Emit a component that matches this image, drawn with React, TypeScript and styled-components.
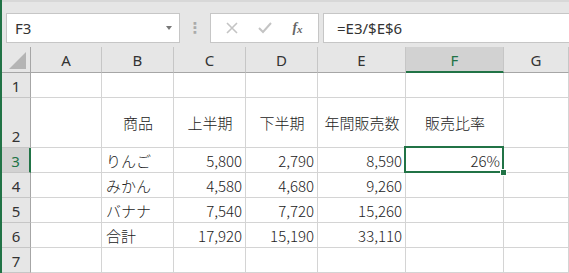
import styled, { createGlobalStyle } from 'styled-components'

const GlobalStyle = createGlobalStyle`
  html, body {
    margin: 0;
    padding: 0;
    background: #e6e6e6;
    overflow: hidden;
  }
  body {
    font-family: "Noto Sans CJK JP", "Noto Sans", sans-serif;
    color: #222;
  }
`

const GREEN = '#217346'

const columns = ['A', 'B', 'C', 'D', 'E', 'F', 'G']

type Cell = { text?: string; align?: 'left' | 'right' | 'center' }

const rows: { num: number; height: number; cells: Cell[] }[] = [
  { num: 1, height: 25, cells: [] },
  {
    num: 2,
    height: 50,
    cells: [
      {},
      { text: '商品', align: 'center' },
      { text: '上半期', align: 'center' },
      { text: '下半期', align: 'center' },
      { text: '年間販売数', align: 'center' },
      { text: '販売比率', align: 'center' },
    ],
  },
  {
    num: 3,
    height: 25,
    cells: [{}, { text: 'りんご' }, { text: '5,800', align: 'right' }, { text: '2,790', align: 'right' }, { text: '8,590', align: 'right' }, { text: '26%', align: 'right' }],
  },
  {
    num: 4,
    height: 25,
    cells: [{}, { text: 'みかん' }, { text: '4,580', align: 'right' }, { text: '4,680', align: 'right' }, { text: '9,260', align: 'right' }],
  },
  {
    num: 5,
    height: 25,
    cells: [{}, { text: 'バナナ' }, { text: '7,540', align: 'right' }, { text: '7,720', align: 'right' }, { text: '15,260', align: 'right' }],
  },
  {
    num: 6,
    height: 25,
    cells: [{}, { text: '合計' }, { text: '17,920', align: 'right' }, { text: '15,190', align: 'right' }, { text: '33,110', align: 'right' }],
  },
  { num: 7, height: 25, cells: [] },
]

const App = () => {
  return (
    <>
      <GlobalStyle />
      <Window>
        <FormulaBar>
          <NameBox>
            <span>F3</span>
            <DropArrow />
          </NameBox>
          <Grip>⋮</Grip>
          <ButtonBox>
            <IconButton>
              <svg width="12" height="12" viewBox="0 0 12 12">
                <path d="M1 1 L11 11 M11 1 L1 11" stroke="#c4c4c4" strokeWidth="1.6" fill="none" />
              </svg>
            </IconButton>
            <IconButton>
              <svg width="14" height="12" viewBox="0 0 14 12">
                <path d="M1 6 L5 10 L13 1" stroke="#c4c4c4" strokeWidth="2" fill="none" />
              </svg>
            </IconButton>
            <FxLabel>
              f<sub>x</sub>
            </FxLabel>
          </ButtonBox>
          <FormulaInput>=E3/$E$6</FormulaInput>
        </FormulaBar>

        <Sheet>
          <Corner>
            <CornerTriangle />
          </Corner>
          {columns.map((c) => (
            <ColHeader key={c} $selected={c === 'F'}>
              {c}
            </ColHeader>
          ))}
          {rows.map((r) => (
            <RowGroup key={r.num} r={r} />
          ))}
        </Sheet>
      </Window>
    </>
  )
}

const RowGroup = ({ r }: { r: { num: number; height: number; cells: Cell[] } }) => {
  return (
    <>
      <RowHeader $selected={r.num === 3} $h={r.height}>
        {r.num}
      </RowHeader>
      {columns.map((c, i) => {
        const cell = r.cells[i] || {}
        const active = r.num === 3 && c === 'F'
        return (
          <GridCell key={c} $align={cell.align || 'left'} $h={r.height}>
            {cell.text}
            {active && (
              <Selection>
                <FillHandle />
              </Selection>
            )}
          </GridCell>
        )
      })}
    </>
  )
}

const Window = styled.div`
  width: 569px;
  height: 273px;
  display: flex;
  flex-direction: column;
  border-left: 2px solid ${GREEN};
  box-sizing: border-box;
  overflow: hidden;
`

const FormulaBar = styled.div`
  height: 53px;
  box-sizing: border-box;
  display: flex;
  align-items: flex-start;
  padding: 11px 0 0 4px;
  border-top: 2px solid #d8d8d8;
  background: #e6e6e6;
`

const NameBox = styled.div`
  width: 174px;
  height: 30px;
  box-sizing: border-box;
  background: #fff;
  border: 1px solid #c6c6c6;
  display: flex;
  align-items: center;
  justify-content: space-between;
  padding: 0 7px 0 8px;
  font-family: "Noto Sans", "Liberation Sans", sans-serif;
  font-size: 15px;
  color: #333;
`

const DropArrow = styled.div`
  width: 0;
  height: 0;
  border-left: 3.5px solid transparent;
  border-right: 3.5px solid transparent;
  border-top: 4px solid #777;
`

const Grip = styled.div`
  width: 30px;
  height: 30px;
  display: flex;
  align-items: center;
  justify-content: center;
  color: #aaa;
  font-size: 15px;
  font-weight: bold;
  font-family: "DejaVu Sans", sans-serif;
`

const ButtonBox = styled.div`
  width: 109px;
  height: 30px;
  box-sizing: border-box;
  background: #fff;
  border: 1px solid #c6c6c6;
  display: flex;
  align-items: center;
  justify-content: space-around;
  padding: 0 4px;
`

const IconButton = styled.div`
  width: 24px;
  height: 24px;
  display: flex;
  align-items: center;
  justify-content: center;
`

const FxLabel = styled.div`
  width: 24px;
  text-align: center;
  font-family: "Liberation Serif", serif;
  font-style: italic;
  font-weight: bold;
  font-size: 14px;
  color: #666;
  sub {
    font-size: 11px;
    vertical-align: -1px;
  }
`

const FormulaInput = styled.div`
  flex: 1;
  margin-left: 4px;
  height: 30px;
  box-sizing: border-box;
  background: #fff;
  border: 1px solid #c6c6c6;
  border-right: none;
  display: flex;
  align-items: center;
  padding-left: 13px;
  font-family: "Noto Sans", "Liberation Sans", sans-serif;
  font-size: 15px;
  color: #333;
`

const Sheet = styled.div`
  flex: 1;
  display: grid;
  grid-template-columns: 29px 71px 72px 72px 72px 88px 98px 1fr;
  grid-auto-rows: auto;
  background: #fff;
  align-content: start;
`

const Corner = styled.div`
  height: 26px;
  box-sizing: border-box;
  background: #e6e6e6;
  border-right: 1px solid #a6a6a6;
  border-bottom: 1px solid #a6a6a6;
  position: relative;
`

const CornerTriangle = styled.div`
  position: absolute;
  right: 4px;
  bottom: 3px;
  width: 0;
  height: 0;
  border-left: 17px solid transparent;
  border-bottom: 17px solid #b4b4b4;
`

const ColHeader = styled.div<{ $selected?: boolean }>`
  height: 26px;
  box-sizing: border-box;
  background: ${(p) => (p.$selected ? '#d2d2d2' : '#e6e6e6')};
  border-right: 1px solid #c6c6c6;
  border-bottom: ${(p) => (p.$selected ? `2px solid ${GREEN}` : '1px solid #a6a6a6')};
  display: flex;
  align-items: center;
  justify-content: center;
  padding-top: 1px;
  font-family: "Noto Sans", "Liberation Sans", sans-serif;
  font-size: 15px;
  color: ${(p) => (p.$selected ? GREEN : '#333')};
`

const RowHeader = styled.div<{ $selected?: boolean; $h: number }>`
  height: ${(p) => p.$h}px;
  box-sizing: border-box;
  background: ${(p) => (p.$selected ? '#d2d2d2' : '#e6e6e6')};
  border-right: ${(p) => (p.$selected ? `2px solid ${GREEN}` : '1px solid #a6a6a6')};
  border-bottom: 1px solid #c6c6c6;
  display: flex;
  align-items: flex-end;
  justify-content: center;
  padding-bottom: 1px;
  font-family: "Noto Sans", "Liberation Sans", sans-serif;
  font-size: 15px;
  color: ${(p) => (p.$selected ? GREEN : '#333')};
`

const GridCell = styled.div<{ $align: 'left' | 'right' | 'center'; $h: number }>`
  position: relative;
  height: ${(p) => p.$h}px;
  box-sizing: border-box;
  border-right: 1px solid #d4d4d4;
  border-bottom: 1px solid #d4d4d4;
  display: flex;
  align-items: center;
  justify-content: ${(p) => (p.$align === 'right' ? 'flex-end' : p.$align === 'center' ? 'center' : 'flex-start')};
  padding: 0 3px 0 4px;
  font-size: 15px;
  font-weight: 300;
  color: #222;
  white-space: nowrap;
`

const Selection = styled.div`
  position: absolute;
  z-index: 2;
  left: -2px;
  top: -2px;
  right: -1px;
  bottom: -1px;
  border: 2px solid ${GREEN};
  pointer-events: none;
`

const FillHandle = styled.div`
  position: absolute;
  right: -5px;
  bottom: -5px;
  width: 5px;
  height: 5px;
  background: ${GREEN};
  border: 1px solid #fff;
`

export default App
